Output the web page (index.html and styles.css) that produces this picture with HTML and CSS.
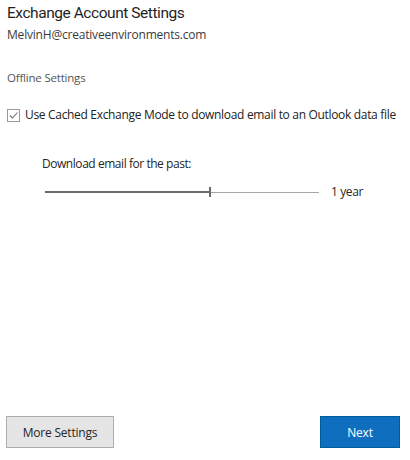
FILE: index.html
```html
<!DOCTYPE html>
<html>
<head>
<meta charset="utf-8">
<link rel="stylesheet" href="styles.css">
</head>
<body>
<div class="page">
  <header class="head">
    <h1 class="title">Exchange Account Settings</h1>
    <div class="email">MelvinH@creativeenvironments.com</div>
  </header>
  <div class="section">Offline Settings</div>
  <label class="check">
    <span class="box"><svg width="11" height="11" viewBox="0 0 11 11"><path d="M2 5.5 L4.5 8 L9.5 2.5" fill="none" stroke="#6d6d6d" stroke-width="1.1"/></svg></span>
    <span class="check-text">Use Cached Exchange Mode to download email to an Outlook data file</span>
  </label>
  <div class="download">
    <div class="dl-label">Download email for the past:</div>
    <div class="slider-row">
      <div class="slider">
        <div class="fill" style="width:164px"></div>
        <div class="thumb"></div>
        <div class="rest"></div>
      </div>
      <div class="val">1 year</div>
    </div>
  </div>
  <div class="spacer"></div>
  <footer class="buttons">
    <button class="btn more">More Settings</button>
    <button class="btn next">Next</button>
  </footer>
</div>
</body>
</html>
```
FILE: styles.css
```css
html, body { margin: 0; padding: 0; background: #fff; }
body { font-family: "Open Sans", "Noto Sans", sans-serif; color: #262626; }
.page { width: 410px; height: 460px; display: flex; flex-direction: column; padding: 0 0 0 7px; box-sizing: border-box; }
.title { margin: 0; padding-top: 2px; font-family: "Roboto", "Open Sans", sans-serif; font-size: 15.5px; font-weight: 400; line-height: 22px; color: #1f1f1f; letter-spacing: -0.45px; }
.email { font-size: 12px; line-height: 16px; margin-top: 3px; color: #3a3a3a; letter-spacing: -0.2px; }
.section { margin-top: 27px; font-size: 11.5px; line-height: 16px; color: #555; letter-spacing: -0.2px; }
.check { display: flex; align-items: center; gap: 5px; margin-top: 21px; font-size: 12px; line-height: 16px; color: #222; letter-spacing: -0.32px; }
.box { width: 11px; height: 11px; border: 1px solid #9a9a9a; display: flex; align-items: center; justify-content: center; background: #fff; }
.download { margin-top: 33px; padding-left: 35px; }
.dl-label { font-size: 12px; line-height: 16px; color: #262626; letter-spacing: -0.45px; }
.slider-row { display: flex; align-items: center; margin-top: 12px; padding-left: 3px; }
.slider { width: 274px; height: 10px; display: flex; align-items: center; }
.fill { height: 2px; background: #6b6b6b; }
.thumb { width: 2px; height: 10px; background: #6b6b6b; }
.rest { flex: 1; height: 1px; background: #a6a6a6; }
.val { margin-left: 12px; font-size: 12px; line-height: 16px; color: #262626; letter-spacing: -0.4px; }
.spacer { flex: 1; }
.buttons { display: flex; justify-content: space-between; padding: 0 10px 12px 0; margin-left: -1px; }
.btn { font-family: inherit; font-size: 12px; height: 32px; box-sizing: border-box; letter-spacing: -0.2px; }
.more { width: 108px; background: #e5e5e5; border: 1px solid #adadad; color: #262626; }
.next { width: 80px; background: #106ebe; border: 1px solid #005a9e; color: #fff; }
```
